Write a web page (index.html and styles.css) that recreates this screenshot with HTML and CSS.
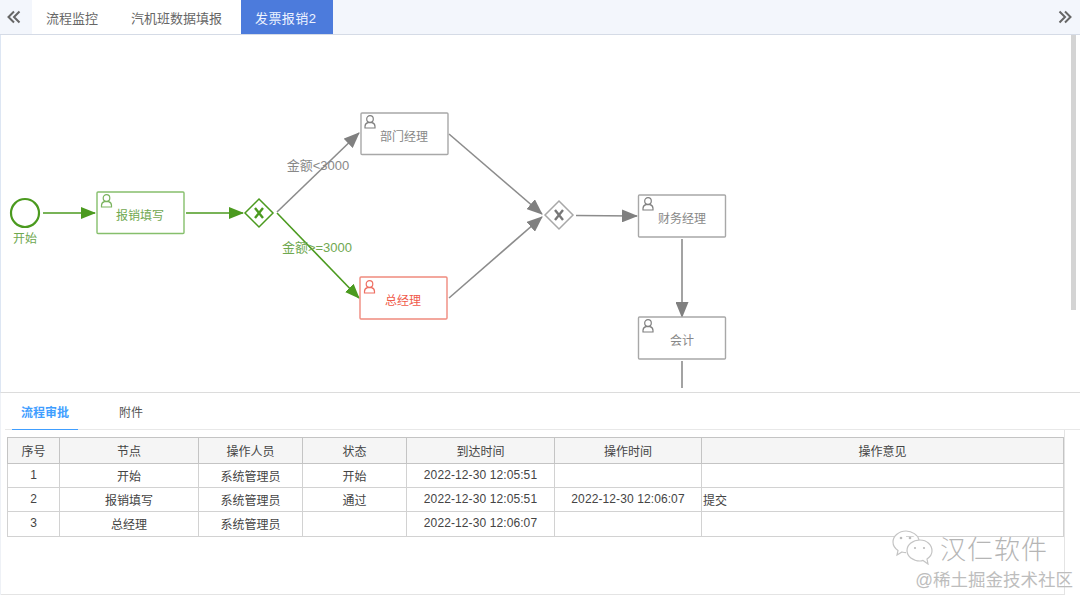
FILE: index.html
```html
<!DOCTYPE html>
<html lang="zh-CN">
<head>
<meta charset="UTF-8" />
<title>发票报销2</title>
<link rel="stylesheet" href="styles.css">
</head>
<body>

<header class="tabbar">
  <span class="tab-arrow"><svg width="14" height="14" viewBox="0 0 14 14"><path d="M7 1.500 1.500 7 7 12.500M12.500 1.500 7 7l5.500 5.500" /></svg></span>
  <a class="tab">流程监控</a>
  <a class="tab">汽机班数据填报</a>
  <a class="tab active">发票报销2</a>
  <span class="tab-arrow right"><svg width="14" height="14" viewBox="0 0 14 14"><path d="M1.500 1.500 7 7l-5.500 5.500M7 1.500 12.500 7 7 12.500" /></svg></span>
</header>

<section class="diagram">
  <svg class="flow" width="1070" height="357" viewBox="0 35 1070 357">
    <defs>
      <marker id="arrowGreen" markerWidth="15" markerHeight="12" refX="14" refY="6" orient="auto" markerUnits="userSpaceOnUse"><path d="M0 0 15 6 0 12z" fill="#4b9a1f" /></marker>
      <marker id="arrowGray" markerWidth="16" markerHeight="13" refX="15" refY="6.500" orient="auto" markerUnits="userSpaceOnUse"><path d="M0 0 16 6.500 0 13z" fill="#808080" /></marker>
      <g id="user" fill="none" stroke-width="1.200">
        <circle cx="6" cy="4" r="3.300" />
        <path d="M1 13v-1.500c0-2 1.500-3.500 3-3.900h4c1.500.4 3 1.900 3 3.900V13z" />
      </g>
      <g id="xmark" fill="none" stroke-width="2.400">
        <path d="M-4-5 4 5M4-5-4 5" />
      </g>
    </defs>

    <!-- 连线 -->
    <path class="line green" d="M43 213H95" marker-end="url(#arrowGreen)" />
    <path class="line green" d="M186 213H243" marker-end="url(#arrowGreen)" />
    <path class="line green" d="M277 213 359 298" marker-end="url(#arrowGreen)" />
    <path class="line gray" d="M277 212 359 133" marker-end="url(#arrowGray)" />
    <path class="line gray" d="M449 134 542 214" marker-end="url(#arrowGray)" />
    <path class="line gray" d="M449 298 542 217" marker-end="url(#arrowGray)" />
    <path class="line gray" d="M576 215.500 637 216" marker-end="url(#arrowGray)" />
    <path class="line gray" d="M682 239V317" marker-end="url(#arrowGray)" />
    <path class="line gray" d="M682 361V388" />

    <!-- 开始 -->
    <circle cx="25" cy="213" r="14" class="start" />
    <text x="25" y="243" class="label fill-green">开始</text>

    <!-- 任务节点 -->
    <rect x="97" y="192" width="87" height="41.500" rx="1" class="task stroke-green" />
    <use href="#user" x="100.500" y="194" class="icon-green" />
    <text x="140" y="220" class="label fill-green">报销填写</text>

    <rect x="361" y="113" width="87" height="41.500" rx="1" class="task stroke-gray" />
    <use href="#user" x="364" y="115" class="icon-gray" />
    <text x="404" y="141" class="label fill-gray">部门经理</text>

    <rect x="360" y="277" width="87" height="42" rx="1" class="task stroke-red" />
    <use href="#user" x="363.500" y="280" class="icon-red" />
    <text x="403" y="305" class="label fill-red">总经理</text>

    <rect x="638.500" y="195" width="87" height="42" rx="1" class="task stroke-gray" />
    <use href="#user" x="642" y="197" class="icon-gray" />
    <text x="682" y="223" class="label fill-gray">财务经理</text>

    <rect x="638.500" y="317" width="87" height="42" rx="1" class="task stroke-gray" />
    <use href="#user" x="642" y="319" class="icon-gray" />
    <text x="682" y="345" class="label fill-gray">会计</text>

    <!-- 网关 -->
    <path d="M259 199 273 213 259 227 245 213z" class="gateway stroke-green-dark" />
    <use href="#xmark" x="259" y="213" class="x-green" />
    <path d="M559 201 573 215 559 229 545 215z" class="gateway stroke-gray" />
    <use href="#xmark" x="559" y="215" class="x-gray" />

    <!-- 条件 -->
    <text x="318" y="170" class="cond fill-gray">金额&lt;3000</text>
    <text x="317" y="252" class="cond fill-green">金额&gt;=3000</text>
  </svg>
  <div class="scrollbar"></div>
</section>

<section class="detail">
  <nav class="subtabs">
    <a class="subtab active">流程审批</a>
    <a class="subtab">附件</a>
  </nav>
  <div class="records-box">
    <table class="records">
      <thead>
        <tr>
          <th class="col-no">序号</th>
          <th class="col-node">节点</th>
          <th class="col-user">操作人员</th>
          <th class="col-state">状态</th>
          <th class="col-arrive">到达时间</th>
          <th class="col-done">操作时间</th>
          <th>操作意见</th>
        </tr>
      </thead>
      <tbody>
        <tr><td>1</td><td>开始</td><td>系统管理员</td><td>开始</td><td class="time">2022-12-30 12:05:51</td><td></td><td></td></tr>
        <tr><td>2</td><td>报销填写</td><td>系统管理员</td><td>通过</td><td class="time">2022-12-30 12:05:51</td><td class="time">2022-12-30 12:06:07</td><td class="opinion">提交</td></tr>
        <tr><td>3</td><td>总经理</td><td>系统管理员</td><td></td><td class="time">2022-12-30 12:06:07</td><td></td><td></td></tr>
      </tbody>
    </table>
  </div>
</section>

<div class="watermark">
  <div class="wm-top">
    <svg width="42" height="35" viewBox="0 0 42 35">
      <path class="wm-back" d="M14 1C7 1 1 6 1 12c0 3.500 2 6.500 5 8.500L5 25l5-3c1.500.4 3 .6 4 .6" />
      <path class="wm-back" d="M14 1c6 0 12 4 13 9" />
      <path class="wm-front" d="M28 10c-7 0-13 4.500-13 10.500S21 31 28 31c1.500 0 2-.2 3-.6l5 3.600-1-5c3-2 5-4.500 5-8 0-6-5-11-12-11z" />
      <circle class="wm-dot" cx="9" cy="8" r="1.300" /><circle class="wm-dot" cx="18" cy="8" r="1.300" />
      <circle class="wm-dot" cx="23" cy="18" r="1.100" /><circle class="wm-dot" cx="32" cy="18" r="1.100" />
    </svg>
    <span class="wm-name">汉仁软件</span>
  </div>
  <div class="wm-site">@稀土掘金技术社区</div>
</div>

</body>
</html>
```

FILE: styles.css
```css
body {
  margin: 0;
  width: 1080px;
  height: 597px;
  overflow: hidden;
  position: relative;
  background: #fff;
  color: #444;
  font-family: "Liberation Sans", "Noto Sans CJK SC", sans-serif;
  font-size: 13px;
}
.tabbar {
  display: flex;
  height: 35px;
  box-sizing: border-box;
  background: #f3f6fc;
  border-bottom: 1px solid #d5dbe6;
}
.tab-arrow {
  width: 28px;
  display: flex;
  align-items: center;
  justify-content: center;
}
.tab-arrow.right {
  margin-left: auto;
  padding-right: 1px;
}
.tab-arrow svg path {
  fill: none;
  stroke: #666;
  stroke-width: 2;
}
.tab {
  display: flex;
  align-items: center;
  padding: 0 19px 0 14px;
  background: #fff;
  color: #666;
}
.tab:first-of-type {
  margin-left: 4px;
}
.tab.active {
  height: 34px;
  padding: 0 17px 0 14px;
  background: #4c7bdc;
  color: #eef3ff;
  letter-spacing: 0.4px;
}

/* 流程图 */
.diagram {
  display: flex;
  height: 358px;
  box-sizing: border-box;
  border-left: 1px solid #dde6f3;
  border-bottom: 1px solid #dcdcdc;
}
.flow {
  display: block;
  flex: none;
  margin-left: -1px;
}
.scrollbar {
  width: 5px;
  height: 275px;
  margin-left: 1px;
  background: #d4d4d4;
}
.line {
  fill: none;
  stroke-width: 1.600;
}
.line.green { stroke: #4b9a1f; }
.line.gray { stroke: #8c8c8c; }
.start {
  fill: #fff;
  stroke: #4b9a1f;
  stroke-width: 2.200;
}
.task {
  fill: #fff;
  stroke-width: 1.400;
}
.gateway {
  fill: #fff;
  stroke-width: 1.500;
}
.stroke-green { stroke: #86bf6c; }
.stroke-green-dark { stroke: #4b9a1f; }
.stroke-gray { stroke: #a8a8a8; }
.stroke-red { stroke: #f08a7e; }
.icon-green { stroke: #7ab35e; }
.icon-gray { stroke: #808080; }
.icon-red { stroke: #ee6f62; }
.x-green { stroke: #4b9a1f; }
.x-gray { stroke: #777; }
.label {
  font-size: 12px;
  text-anchor: middle;
}
.cond {
  font-size: 13px;
  text-anchor: middle;
}
.fill-green { fill: #6fa850; }
.fill-gray { fill: #888; }
.fill-red { fill: #f0594a; }

/* 审批明细 */
.detail {
  box-sizing: border-box;
  border-left: 1px solid #eef1f6;
}
.subtabs {
  display: flex;
  height: 37px;
  margin-left: 4px;
  box-sizing: border-box;
  border-bottom: 1px solid #e8e8e8;
}
.subtab {
  display: flex;
  align-items: center;
  justify-content: center;
  height: 37px;
  box-sizing: border-box;
  color: #555;
  font-size: 12px;
}
.subtab.active {
  width: 66px;
  margin-left: 7px;
  color: #409eff;
  font-weight: bold;
  border-bottom: 1px solid #409eff;
}
.subtab:not(.active) {
  margin-left: 28px;
  width: 50px;
}
.records-box {
  width: 1064px;
  height: 165px;
  box-sizing: border-box;
  padding: 7px 0 0 6px;
  border-right: 1px solid #e4e4e4;
  border-bottom: 1px solid #e4e4e4;
}
.records {
  width: 1057px;
  border-collapse: collapse;
  table-layout: fixed;
  font-size: 12px;
  color: #444;
}
.records th,
.records td {
  border: 1px solid #d2d2d2;
  padding: 0 0 1px;
  text-align: center;
  font-weight: normal;
  height: 22.200px;
}
.records th {
  padding: 0;
  height: 25px;
  background: #f5f5f5;
  border-color: #c4c4c4;
}
.records td.time { letter-spacing: 0.1px; }
.records td.opinion { text-align: left; padding-left: 1px; }
.col-no { width: 51px; }
.col-node { width: 138px; }
.col-user,
.col-state { width: 103px; }
.col-arrive { width: 147px; }
.col-done { width: 146px; }

/* 水印 */
.watermark {
  position: absolute;
  right: 7px;
  bottom: 6px;
  width: 186px;
  color: #a9a9a9;
  pointer-events: none;
}
.wm-top {
  display: flex;
  align-items: center;
  gap: 6px;
  margin-left: 5px;
}
.wm-name {
  font-size: 26px;
  letter-spacing: 1px;
  color: #b5b5b5;
  font-weight: 300;
}
.wm-site {
  font-size: 17.500px;
  text-align: right;
  color: #bdbdbd;
}
.wm-back,
.wm-front {
  fill: #fff;
  stroke: #c4c4c4;
  stroke-width: 1.200;
}
.wm-dot { fill: #bbb; }
```
